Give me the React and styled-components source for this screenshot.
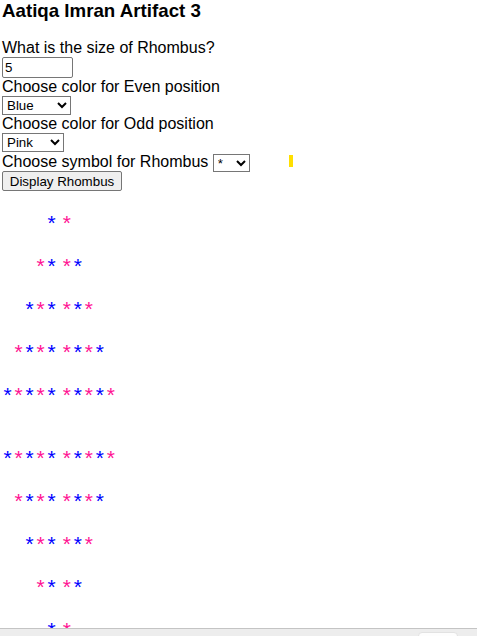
import { useState } from "react";
import styled, { createGlobalStyle } from "styled-components";

const GlobalStyle = createGlobalStyle`
  body {
    margin: 0;
    padding: 0 2px;
    background: #fff;
    color: #000;
    font-family: "Liberation Sans", Arial, sans-serif;
    font-size: 16px;
  }
`;

const COLORS = { Blue: "#0000ff", Pink: "#ff1493", Red: "#ff0000", Green: "#008000" };

function App() {
  const [size, setSize] = useState("5");
  const [even, setEven] = useState("Blue");
  const [odd, setOdd] = useState("Pink");
  const [symbol, setSymbol] = useState("*");

  const n = Math.max(0, Math.min(20, parseInt(size, 10) || 0));
  const top = Array.from({ length: n }, (_, i) => i + 1);
  const bottom = [...top].reverse();

  // column index across the full row decides the colour
  const renderRow = (k, key) => {
    const left = Array.from({ length: k }, (_, j) => n - k + j);
    const right = Array.from({ length: k }, (_, j) => n + j);
    const paint = (col) => COLORS[col % 2 === 0 ? even : odd];
    return (
      <Row key={key}>
        <Half $width={n * 11}>
          {left.map((c) => (
            <Star key={c} style={{ color: paint(c) }}>{symbol}</Star>
          ))}
        </Half>
        <Half>
          {right.map((c) => (
            <Star key={c} style={{ color: paint(c) }}>{symbol}</Star>
          ))}
        </Half>
      </Row>
    );
  };

  return (
    <Page>
      <GlobalStyle />
      <Title>Aatiqa Imran Artifact 3</Title>
      <Label htmlFor="size">What is the size of Rhombus?</Label>
      <SizeInput id="size" value={size} onChange={(e) => setSize(e.target.value)} />
      <Label htmlFor="even">Choose color for Even position</Label>
      <Select id="even" $width={69} value={even} onChange={(e) => setEven(e.target.value)}>
        <option>Blue</option>
        <option>Pink</option>
        <option>Red</option>
        <option>Green</option>
      </Select>
      <Label htmlFor="odd">Choose color for Odd position</Label>
      <Select id="odd" $width={62} value={odd} onChange={(e) => setOdd(e.target.value)}>
        <option>Pink</option>
        <option>Blue</option>
        <option>Red</option>
        <option>Green</option>
      </Select>
      <SymbolLine>
        Choose symbol for Rhombus{" "}
        <Select $width={37} $inline value={symbol} onChange={(e) => setSymbol(e.target.value)}>
          <option>*</option>
          <option>#</option>
          <option>@</option>
        </Select>
        <Marker />
      </SymbolLine>
      <Button type="button">Display Rhombus</Button>

      <Rhombus>
        <Block>{top.map((k) => renderRow(k, "t" + k))}</Block>
        <Block>{bottom.map((k) => renderRow(k, "b" + k))}</Block>
      </Rhombus>

      <ScrollBar>
        <Thumb />
      </ScrollBar>
    </Page>
  );
}

const Page = styled.div`
  padding-bottom: 40px;
`;

const Title = styled.h3`
  margin: 0 0 17px;
  font-size: 18.72px;
  font-weight: bold;
`;

const Label = styled.label`
  display: block;
`;

const SizeInput = styled.input`
  display: block;
  box-sizing: border-box;
  width: 71px;
  height: 21px;
  margin: 0;
  padding: 1px 2px;
  border: 1px solid #767676;
  border-radius: 2px;
  font-family: "Liberation Sans", Arial, sans-serif;
  font-size: 13.33px;
`;

const Select = styled.select`
  display: ${(p) => (p.$inline ? "inline-block" : "block")};
  box-sizing: border-box;
  width: ${(p) => p.$width}px;
  height: ${(p) => (p.$inline ? 18 : 19)}px;
  margin: 0;
  padding: 0;
  border: 1px solid #767676;
  border-radius: 0;
  background: #fff;
  font-family: "Liberation Sans", Arial, sans-serif;
  font-size: 13.33px;
  vertical-align: middle;
`;

const SymbolLine = styled.div`
  line-height: 19px;
  height: 19px;
`;

const Marker = styled.span`
  display: inline-block;
  width: 4px;
  height: 12px;
  margin-left: 39px;
  background: #ffdf00;
  vertical-align: baseline;
`;

const Button = styled.button`
  display: block;
  box-sizing: border-box;
  width: 120px;
  height: 20px;
  margin: 0;
  padding: 0 6px;
  border: 1px solid #767676;
  border-radius: 2px;
  background: #efefef;
  font-family: "Liberation Sans", Arial, sans-serif;
  font-size: 13.33px;
  color: #000;
`;

const Rhombus = styled.div`
  display: flex;
  flex-direction: column;
  gap: 20px;
  padding-top: 10px;
`;

const Block = styled.div`
  display: flex;
  flex-direction: column;
`;

const Row = styled.div`
  display: flex;
  gap: 4.4px;
  height: 43px;
  line-height: 43px;
`;

const Half = styled.div`
  display: flex;
  justify-content: flex-end;
  width: ${(p) => (p.$width ? p.$width + "px" : "auto")};
`;

const Star = styled.span`
  width: 11px;
  text-align: center;
  font-size: 21px;
`;

const ScrollBar = styled.div`
  position: fixed;
  left: 0;
  right: 0;
  bottom: 0;
  height: 7px;
  border-top: 1px solid #c4c4c4;
  background: #ededed;
`;

const Thumb = styled.div`
  position: absolute;
  left: 418px;
  top: 3px;
  width: 38px;
  height: 8px;
  border-radius: 4px;
  background: #fdfdfd;
  border: 1px solid #e2e2e2;
`;

export default App;
